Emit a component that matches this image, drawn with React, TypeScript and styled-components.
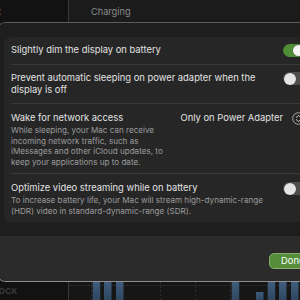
import React from "react";
import styled, { createGlobalStyle } from "styled-components";

const GlobalStyle = createGlobalStyle`
  html, body { margin: 0; padding: 0; background: #141414; }
  body {
    font-family: Inter, "Noto Sans", "Liberation Sans", sans-serif;
    -webkit-font-smoothing: antialiased;
  }
`;

const Page = styled.div`
  width: 300px;
  height: 300px;
  overflow: hidden;
  display: flex;
  flex-direction: column;
  background: #141414;
`;

const Backdrop = styled.div<{ $h: number }>`
  flex: none;
  height: ${(p) => p.$h}px;
  display: grid;
  grid-template-columns: 68px 1px 1fr;
`;

const SidePane = styled.div`
  background: #121212;
  display: flex;
  align-items: center;
  overflow: visible;
  min-width: 0;
`;

const SideLabel = styled.span<{ $shift: number; $bold?: boolean }>`
  margin-left: ${(p) => p.$shift}px;
  white-space: nowrap;
  font-size: ${(p) => (p.$bold ? 8 : 9.2)}px;
  font-weight: ${(p) => (p.$bold ? 700 : 400)};
  color: ${(p) => (p.$bold ? "#3a3a3a" : "#5a5a5a")};
  letter-spacing: ${(p) => (p.$bold ? "0.3px" : "0")};
`;

const PaneDivider = styled.div`
  background: #3a3a3a;
`;

const MainPane = styled.div`
  background: #1b1b1b;
  display: flex;
  align-items: center;
  padding-left: 22px;
  font-size: 9.2px;
  color: #8a8a8a;
  min-width: 0;
  overflow: hidden;
`;

const ChartPane = styled.div`
  background: #161616;
  min-width: 0;
  overflow: hidden;
  display: flex;
`;

const Sheet = styled.div`
  flex: none;
  width: 324px;
  height: 260px;
  margin-left: -4px;
  box-sizing: border-box;
  border: 1px solid #5d5d5d;
  border-bottom-color: #8e8e8e;
  border-radius: 10px;
  overflow: hidden;
  display: flex;
  flex-direction: column;
  background: #1e1e1e;
`;

const ScrollArea = styled.div`
  padding: 14px 7px 14px 7px;
  background: #1e1e1e;
`;

const Card = styled.div`
  background: #262626;
  border-radius: 7px;
  padding: 0 7px;
`;

const Row = styled.div<{ $divider?: boolean }>`
  display: grid;
  grid-template-columns: 1fr auto;
  column-gap: 12px;
  align-items: start;
  padding: 7px 0;
  border-top: ${(p) => (p.$divider ? "1px solid #3a3a3a" : "none")};
`;

const TallRow = styled(Row)`
  padding: 8px 0 6px;
`;

const TextCol = styled.div`
  display: flex;
  flex-direction: column;
  gap: 1px;
  min-width: 0;
`;

const Title = styled.div`
  font-size: 9.4px;
  line-height: 12px;
  color: #e2e2e2;
  white-space: nowrap;
`;

const Sub = styled.div`
  font-size: 8.1px;
  line-height: 10.5px;
  color: #9c9c9c;
  white-space: nowrap;
`;

const Switch = styled.div<{ $on?: boolean }>`
  width: 22px;
  height: 13px;
  box-sizing: border-box;
  border-radius: 7px;
  padding: 1px;
  display: flex;
  align-items: center;
  justify-content: ${(p) => (p.$on ? "flex-end" : "flex-start")};
  background: ${(p) => (p.$on ? "#4f8d37" : "#4e4e4e")};
`;

const Knob = styled.div<{ $on?: boolean }>`
  width: ${(p) => (p.$on ? 11 : 12)}px;
  height: ${(p) => (p.$on ? 11 : 12)}px;
  margin: ${(p) => (p.$on ? "0" : "-0.5px")};
  border-radius: 50%;
  background: ${(p) => (p.$on ? "#f4f4f4" : "#e4e4e4")};
  box-shadow: 0 0 1px rgba(0, 0, 0, 0.5);
`;

const Popup = styled.div`
  display: flex;
  align-items: center;
  gap: 9px;
  margin-top: -0.5px;
`;

const PopupLabel = styled.span`
  font-size: 9.4px;
  line-height: 12px;
  color: #e2e2e2;
  white-space: nowrap;
`;

const Footer = styled.div`
  flex: 1;
  background: #2b2b2b;
  display: flex;
  justify-content: flex-end;
  align-items: flex-start;
  padding: 17px 6px 0 0;
`;

const DoneButton = styled.button`
  width: 44px;
  height: 16px;
  box-sizing: border-box;
  border-radius: 5px;
  border: 1px solid #86ab6c;
  background: #558d3a;
  color: #ffffff;
  font-family: inherit;
  font-size: 9.4px;
  line-height: 14px;
  padding: 0 0 0 11px;
  text-align: left;
`;

function Toggle({ on }: { on?: boolean }) {
  return (
    <Switch $on={on}>
      <Knob $on={on} />
    </Switch>
  );
}

function PopupIcon() {
  return (
    <svg width="13" height="13" viewBox="0 0 13 13">
      <circle cx="6.5" cy="6.5" r="5.8" fill="none" stroke="#a6a6a6" strokeWidth="1" />
      <path d="M4.3 5.4 L6.5 3.4 L8.7 5.4" fill="none" stroke="#c8c8c8" strokeWidth="1" strokeLinecap="round" strokeLinejoin="round" />
      <path d="M4.3 7.6 L6.5 9.6 L8.7 7.6" fill="none" stroke="#c8c8c8" strokeWidth="1" strokeLinecap="round" strokeLinejoin="round" />
    </svg>
  );
}

const bars = [
  { x: 23.7, y: 0 },
  { x: 35, y: 0 },
  { x: 47, y: 0 },
  { x: 162.7, y: 0 },
  { x: 187, y: 10 },
  { x: 198.7, y: 0 },
  { x: 210, y: 0 },
  { x: 222, y: 0 },
];

function UsageChart() {
  return (
    <svg width="231" height="18" viewBox="0 0 231 18">
      <defs>
        <linearGradient id="bar" x1="0" y1="0" x2="0" y2="1">
          <stop offset="0" stopColor="#3f5d7c" />
          <stop offset="1" stopColor="#2f4760" />
        </linearGradient>
      </defs>
      <line x1="0" y1="3.5" x2="231" y2="3.5" stroke="#262626" strokeWidth="1" />
      {[22, 91, 126, 161].map((x) => (
        <line key={x} x1={x + 0.5} y1="0" x2={x + 0.5} y2="18" stroke="#2a2a2a" strokeWidth="1" strokeDasharray="2 2" />
      ))}
      {bars.map((b) => (
        <rect key={b.x} x={b.x} y={b.y} width="7.5" height={18 - b.y} fill="url(#bar)" />
      ))}
    </svg>
  );
}

export default function App() {
  return (
    <Page>
      <GlobalStyle />
      <Backdrop $h={22}>
        <SidePane>
          <SideLabel $shift={-17}>Last</SideLabel>
        </SidePane>
        <PaneDivider />
        <MainPane>Charging</MainPane>
      </Backdrop>

      <Sheet>
        <ScrollArea>
          <Card>
            <Row>
              <Title>Slightly dim the display on battery</Title>
              <Toggle on />
            </Row>
            <Row $divider>
              <Title>
                Prevent automatic sleeping on power adapter when the
                <br />
                display is off
              </Title>
              <Toggle />
            </Row>
            <TallRow $divider>
              <TextCol>
                <Title>Wake for network access</Title>
                <Sub>
                  While sleeping, your Mac can receive
                  <br />
                  incoming network traffic, such as
                  <br />
                  iMessages and other iCloud updates, to
                  <br />
                  keep your applications up to date.
                </Sub>
              </TextCol>
              <Popup>
                <PopupLabel>Only on Power Adapter</PopupLabel>
                <PopupIcon />
              </Popup>
            </TallRow>
            <TallRow $divider>
              <TextCol>
                <Title>Optimize video streaming while on battery</Title>
                <Sub>
                  To increase battery life, your Mac will stream high-dynamic-range
                  <br />
                  (HDR) video in standard-dynamic-range (SDR).
                </Sub>
              </TextCol>
              <Toggle />
            </TallRow>
          </Card>
        </ScrollArea>
        <Footer>
          <DoneButton>Done</DoneButton>
        </Footer>
      </Sheet>

      <Backdrop $h={18}>
        <SidePane>
          <SideLabel $shift={-12} $bold>
            CLOCK
          </SideLabel>
        </SidePane>
        <PaneDivider />
        <ChartPane>
          <UsageChart />
        </ChartPane>
      </Backdrop>
    </Page>
  );
}
